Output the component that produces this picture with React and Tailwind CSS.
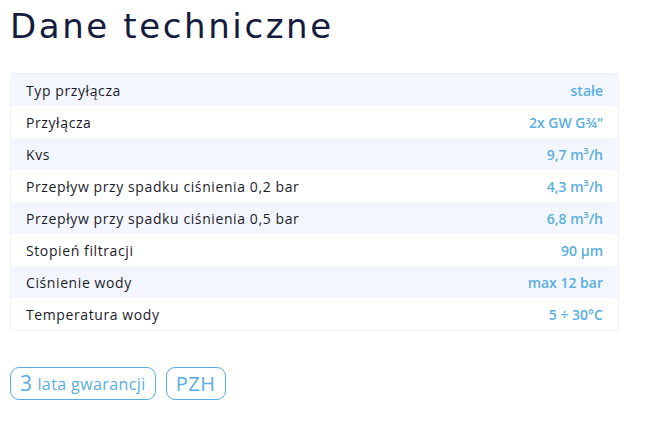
import React from "react";

const rows = [
  ["Typ przyłącza", "stałe"],
  ["Przyłącza", "2x GW G¾\""],
  ["Kvs", "9,7 m³/h"],
  ["Przepływ przy spadku ciśnienia 0,2 bar", "4,3 m³/h"],
  ["Przepływ przy spadku ciśnienia 0,5 bar", "6,8 m³/h"],
  ["Stopień filtracji", "90 µm"],
  ["Ciśnienie wody", "max 12 bar"],
  ["Temperatura wody", "5 ÷ 30°C"],
];

export default function App() {
  return (
    <div className="w-[652px] h-[422px] bg-white px-[10px] pt-[6px] font-['Open_Sans',sans-serif]">
      <h2 className="text-[34px] leading-[40px] font-normal text-[#141b3d] tracking-[2.6px] font-['DejaVu_Sans',sans-serif]">
        Dane techniczne
      </h2>

      <div className="mt-[27px] w-[609px] border border-[#f0f2f6]">
        {rows.map(([label, value], i) => (
          <div
            key={label}
            className={`flex items-center justify-between h-[32px] px-[15px] text-[14px] ${
              i % 2 === 0 ? "bg-[#f3f7fd]" : "bg-white"
            }`}
          >
            <span className="text-[#1b1b28] tracking-[0.6px]">{label}</span>
            <span className="font-semibold text-[#5aaee0]">{value}</span>
          </div>
        ))}
      </div>

      <div className="mt-[36px] flex gap-[10px]">
        <div className="flex items-center h-[33px] pl-[9px] pr-[9px] rounded-[9px] border border-[#5aaee0] text-[#5aaee0] text-[16px] tracking-[0.4px]">
          <span className="text-[21px] font-medium mr-[5px]">3</span>
          lata gwarancji
        </div>
        <div className="flex items-center h-[33px] px-[9px] rounded-[9px] border border-[#5aaee0] text-[#5aaee0] text-[20px] font-medium tracking-[0.6px]">
          PZH
        </div>
      </div>
    </div>
  );
}
